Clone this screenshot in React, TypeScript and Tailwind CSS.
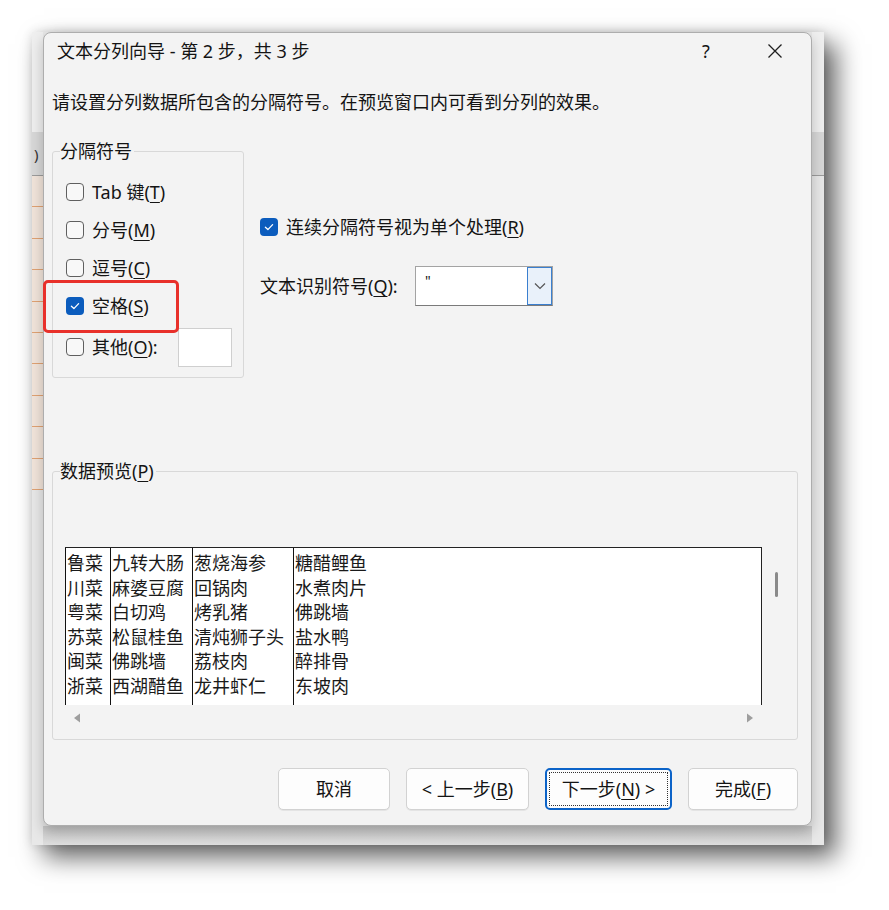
import React from 'react'

const ui = "font-[family-name:'Noto_Sans','Noto_Sans_CJK_SC',sans-serif]"
const cjk = "font-[family-name:'Noto_Sans_CJK_SC',sans-serif]"

function U({ c }: { c: string }) {
  return <span className="underline decoration-1 underline-offset-[3px]">{c}</span>
}

function Check({ checked }: { checked?: boolean }) {
  if (checked) {
    return (
      <span className="flex h-[18px] w-[18px] shrink-0 items-center justify-center rounded-[4px] bg-[#0b5cbd]">
        <svg width="12" height="12" viewBox="0 0 12 12">
          <path d="M2.4 6.3 L4.9 8.6 L9.6 3.6" fill="none" stroke="white" strokeWidth="1.3" strokeLinecap="round" strokeLinejoin="round" />
        </svg>
      </span>
    )
  }
  return <span className="h-[18px] w-[18px] shrink-0 rounded-[4px] border border-[#5f5f5f] bg-[#f8f8f8]" />
}

function Option({ checked, children }: { checked?: boolean; children: React.ReactNode }) {
  return (
    <div className="flex h-[38px] items-center gap-[8px]">
      <Check checked={checked} />
      <span className="leading-[24px]">{children}</span>
    </div>
  )
}

const rows = [
  ['鲁菜', '九转大肠', '葱烧海参', '糖醋鲤鱼'],
  ['川菜', '麻婆豆腐', '回锅肉', '水煮肉片'],
  ['粤菜', '白切鸡', '烤乳猪', '佛跳墙'],
  ['苏菜', '松鼠桂鱼', '清炖狮子头', '盐水鸭'],
  ['闽菜', '佛跳墙', '荔枝肉', '醉排骨'],
  ['浙菜', '西湖醋鱼', '龙井虾仁', '东坡肉'],
]

const colWidths = ['w-[45px]', 'w-[82px]', 'w-[101px]', 'flex-1']

function Preview() {
  return (
    <div className="flex">
      <div className="flex w-[697px] flex-col">
        <div className={`flex h-[158px] border-t-[1.5px] border-r-[1.5px] border-[#222] bg-white ${cjk} text-[18px] text-[#1a1a1a]`}>
          {colWidths.map((w, ci) => (
            <div key={ci} className={`${w} flex flex-col border-l-[1.5px] border-[#111] pl-[1px] pt-[2px]`}>
              {rows.map((r, ri) => (
                <div key={ri} className="h-[24.5px] whitespace-nowrap leading-[24.5px]">
                  {r[ci]}
                </div>
              ))}
            </div>
          ))}
        </div>
        <div className="flex h-[25px] items-center justify-between px-[8px]">
          <svg width="8" height="10" viewBox="0 0 8 10">
            <path d="M7 0.5 L1 5 L7 9.5 Z" fill="#9e9e9e" />
          </svg>
          <svg width="8" height="10" viewBox="0 0 8 10">
            <path d="M1 0.5 L7 5 L1 9.5 Z" fill="#9e9e9e" />
          </svg>
        </div>
      </div>
      <div className="flex w-[28px] justify-center pt-[25px]">
        <div className="h-[25px] w-[3px] rounded-full bg-[#8a8a8a]" />
      </div>
    </div>
  )
}

function Button({ w, primary, children }: { w: string; primary?: boolean; children: React.ReactNode }) {
  if (primary) {
    return (
      <div className={`${w} h-[42px] rounded-[5px] border-2 border-[#0b63c8] bg-[#fdfdfd] p-[2px]`}>
        <div className="flex h-full items-center justify-center border border-dotted border-[#333]">{children}</div>
      </div>
    )
  }
  return (
    <div className={`${w} flex h-[42px] items-center justify-center rounded-[5px] border border-[#d2d2d2] bg-[#fdfdfd] shadow-[0_1px_0_rgba(0,0,0,0.06)]`}>
      {children}
    </div>
  )
}

function Dialog() {
  return (
    <div className={`relative flex h-[794px] flex-col rounded-[8px] border border-[#adadad] bg-[#f3f3f3] shadow-[0_6px_14px_rgba(0,0,0,0.22)] ${ui} text-[18px] text-[#141414]`}>
      <div className="flex h-[36px] items-center justify-between pl-[13px] pr-[13px]">
        <span className="leading-[24px]">文本分列向导 - 第 2 步，共 3 步</span>
        <div className="flex items-center gap-[23px]">
          <span className="flex w-[46px] justify-center leading-[24px]">?</span>
          <span className="flex w-[46px] justify-center">
            <svg width="16" height="16" viewBox="0 0 16 16">
              <path d="M1.5 1.5 L14.5 14.5 M14.5 1.5 L1.5 14.5" stroke="#1f1f1f" strokeWidth="1.3" />
            </svg>
          </span>
        </div>
      </div>

      <div className="mt-[21px] pl-[8px] leading-[24px]">请设置分列数据所包含的分隔符号。在预览窗口内可看到分列的效果。</div>

      <div className="mt-[25px] flex pl-[8px]">
        <fieldset className="w-[192px] rounded-[3px] border border-[#d8d8d8] px-[7px] pb-[8px]">
          <legend className="pr-[2px] leading-[24px]">分隔符号</legend>
          <div className="ml-[6px] pt-[10px]">
            <Option>Tab 键(<U c="T" />)</Option>
            <Option>分号(<U c="M" />)</Option>
            <Option>逗号(<U c="C" />)</Option>
            <Option checked>空格(<U c="S" />)</Option>
            <div className="flex h-[44px] items-center">
              <div className="flex w-[112px] items-center gap-[8px]">
                <Check />
                <span className="leading-[24px]">其他(<U c="O" />):</span>
              </div>
              <div className="h-[39px] w-[54px] border border-[#cfcfcf] bg-white" />
            </div>
          </div>
        </fieldset>

        <div className="ml-[16px] flex flex-col">
          <div className="mt-[76px] flex h-[24px] items-center gap-[8px]">
            <Check checked />
            <span className="leading-[24px]">连续分隔符号视为单个处理(<U c="R" />)</span>
          </div>
          <div className="mt-[27px] flex h-[40px] items-center">
            <span className="w-[155px] leading-[24px]">文本识别符号(<U c="Q" />):</span>
            <div className="flex h-[40px] w-[138px] border border-[#a3a3a3] border-b-[#7a7a7a] bg-white">
              <span className="flex-1 pl-[9px] pt-[4px] text-[14px] leading-[20px]">"</span>
              <div className="flex w-[25px] items-center justify-center border border-[#3a7fcf] bg-[#e9f1fa]">
                <svg width="12" height="8" viewBox="0 0 12 8">
                  <path d="M1 1.5 L6 6.5 L11 1.5" fill="none" stroke="#555" strokeWidth="1.2" />
                </svg>
              </div>
            </div>
          </div>
        </div>
      </div>

      <fieldset className="ml-[8px] mt-[81px] w-[746px] rounded-[3px] border border-[#d8d8d8] px-[7px] pb-[9px]">
        <legend className="pr-[2px] leading-[24px]">数据预览(<U c="P" />)</legend>
        <div className="pl-[5px] pt-[64px]">
          <Preview />
        </div>
      </fieldset>

      <div className="mt-[28px] flex justify-end gap-[16px] pr-[13px] leading-[24px]">
        <Button w="w-[112px]">取消</Button>
        <Button w="w-[123px]">&lt; 上一步(<U c="B" />)</Button>
        <Button w="w-[127px]" primary>下一步(<U c="N" />) &gt;</Button>
        <Button w="w-[110px]">完成(<U c="F" />)</Button>
      </div>

      <div className="absolute left-[-1px] top-[247px] h-[53px] w-[136px] rounded-[5px] border-[3px] border-[#e8302a]" />
    </div>
  )
}

function SideStrip({ side }: { side: 'left' | 'right' }) {
  const w = side === 'left' ? 'w-[11px]' : 'w-[12px]'
  return (
    <div className={`${w} flex flex-col`}>
      <div className="h-[100px] bg-[#efefef]" />
      <div className="flex h-[44px] items-center overflow-hidden border-b border-[#9c9c9c] bg-[#d8d8d8]">
        {side === 'left' && <span className={`${ui} pl-[2px] text-[15px] leading-[20px] text-[#333]`}>)</span>}
      </div>
      {side === 'left' &&
        Array.from({ length: 10 }).map((_, i) => (
          <div key={i} className="h-[31.4px] border-b-[1.5px] border-[#e0a273] bg-[#f1e4da]" />
        ))}
      <div className="flex-1 bg-[#e8e8e8]" />
    </div>
  )
}

export default function App() {
  return (
    <div className="h-[910px] w-[889px] overflow-hidden bg-white pl-[32px] pt-[32px]">
      <div className="flex h-[813px] w-[792px] bg-[#e6e6e6] shadow-[12px_12px_24px_rgba(0,0,0,0.62),0_0_10px_rgba(0,0,0,0.12)]">
        <SideStrip side="left" />
        <div className="flex w-[769px] flex-col">
          <Dialog />
          <div className="flex-1 bg-gradient-to-b from-[#c9c9c9] to-[#dedede]" />
        </div>
        <SideStrip side="right" />
      </div>
    </div>
  )
}
